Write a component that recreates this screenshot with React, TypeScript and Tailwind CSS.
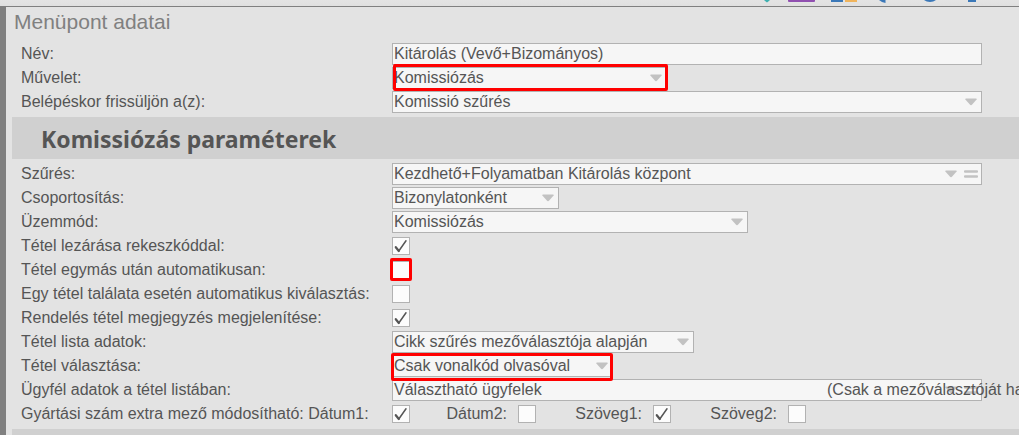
import { useState } from 'react'
import type { ReactNode } from 'react'
import clsx from 'clsx'

const FIELD = 'h-[22px] w-full border border-[#b2b2b2] bg-[#f6f6f6] px-px text-base leading-5 text-[#555] outline-none'

function Row({ label, id, children }: { label: string; id: string; children: ReactNode }) {
  return (
    <div className="flex h-6 items-center">
      <label htmlFor={id} className="w-[371px] shrink-0 whitespace-nowrap">{label}</label>
      {children}
    </div>
  )
}

function Arrow() {
  return (
    <svg viewBox="0 0 12 8" className="h-2 w-3" fill="#c2c2c2">
      <path d="M1 .5h10q1 0 .6 1L7.2 6.6q-1.2 1.2-2.4 0L.4 1.5Q0 .5 1 .5z" />
    </svg>
  )
}

function Equals() {
  return (
    <svg viewBox="0 0 14 8" className="h-2 w-3.5" fill="#c2c2c2">
      <rect y=".2" width="14" height="2.5" rx="1" />
      <rect y="5.2" width="14" height="2.5" rx="1" />
    </svg>
  )
}

interface SelectProps {
  id: string
  value: string
  width: string
  withEquals?: boolean
  children?: ReactNode
}

function Select({ id, value, width, withEquals, children }: SelectProps) {
  return (
    <div className={clsx('relative', width)}>
      <select id={id} className={clsx(FIELD, 'appearance-none rounded-none')}>
        <option>{value}</option>
      </select>
      <div className={clsx('pointer-events-none absolute inset-y-0 flex items-center gap-[7px]', withEquals ? 'right-1' : 'right-[5px]')}>
        <Arrow />
        {withEquals && <Equals />}
      </div>
      {children}
    </div>
  )
}

function Check({ id, initial = false, children }: { id: string; initial?: boolean; children?: ReactNode }) {
  const [checked, setChecked] = useState(initial)
  return (
    <div className="relative size-[18px] shrink-0">
      <input
        id={id}
        type="checkbox"
        checked={checked}
        onChange={e => setChecked(e.target.checked)}
        className="block size-[18px] appearance-none border border-[#b2b2b2] bg-[#fcfcfc]"
      />
      {checked && (
        <svg viewBox="0 0 18 18" className="pointer-events-none absolute inset-0" fill="none" stroke="#555" strokeLinecap="round" strokeLinejoin="round">
          <path d="M3.8 10.2L6.8 14" strokeWidth="2.2" />
          <path d="M6.8 14L14 3.8" strokeWidth="1.5" />
        </svg>
      )}
      {children}
    </div>
  )
}

function Highlight({ className }: { className: string }) {
  return <div className={clsx('pointer-events-none absolute z-10 rounded-xs border-3 border-[#f00]', className)} />
}

function Toolbar() {
  return (
    <div className="flex h-1.5 justify-end bg-linear-to-b from-[#e4e4e4] to-[#e0e0e0]">
      <svg viewBox="0 0 259 6" className="h-1.5 w-[259px]">
        <path d="M4 0h6L7.5 2.2h-1z" fill="#3fb0b0" />
        <path d="M28 0h27v1q0 1-1 1H29q-1 0-1-1z" fill="#9050b0" />
        <path d="M71 0h12v2H71z" fill="#3b78b8" />
        <path d="M85 0h12v2H85z" fill="#f0b45c" />
        <path d="M119 0h6.5v3q-3 0-6.5-3z" fill="#3b78b8" />
        <path d="M164 0h12q-2.5 2-6 2t-6-2z" fill="#3b78b8" />
        <path d="M208 0h8v2h-8z" fill="#3b78b8" />
      </svg>
    </div>
  )
}

export default function App() {
  return (
    <div className="min-h-screen overflow-hidden bg-[#e3e3e3] font-['Liberation_Sans',Arial,sans-serif] text-base leading-5 text-[#555]">
      <Toolbar />
      <main className="border-t border-l-6 border-[#808080]">
        <h1 className="px-2 text-[21px] leading-[30px] text-[#808080]">Menüpont adatai</h1>

        <section className="mt-[5px] pr-[37px] pb-[3px] pl-[15px]">
          <Row label="Név:" id="nev">
            <input id="nev" type="text" defaultValue="Kitárolás (Vevő+Bizományos)" className={FIELD} />
          </Row>
          <Row label="Művelet:" id="muvelet">
            <Select id="muvelet" value="Komissiózás" width="w-[275px]">
              <Highlight className="-top-[3px] -right-px -bottom-0.5 left-px" />
            </Select>
          </Row>
          <Row label="Belépéskor frissüljön a(z):" id="frissul">
            <Select id="frissul" value="Komissió szűrés" width="flex-1" />
          </Row>
        </section>

        <h2 className="ml-1.5 bg-[#d0d0d0] pt-0.5 pl-[29px] font-['Noto_Sans','Open_Sans',sans-serif] text-[23px] leading-10 font-bold">
          Komissiózás paraméterek
        </h2>

        <section className="py-[3px] pr-[37px] pl-[15px]">
          <Row label="Szűrés:" id="szures">
            <Select id="szures" value="Kezdhető+Folyamatban Kitárolás központ" width="flex-1" withEquals />
          </Row>
          <Row label="Csoportosítás:" id="csoport">
            <Select id="csoport" value="Bizonylatonként" width="w-[167px]" />
          </Row>
          <Row label="Üzemmód:" id="uzemmod">
            <Select id="uzemmod" value="Komissiózás" width="w-[356px]" />
          </Row>
          <Row label="Tétel lezárása rekeszkóddal:" id="lezaras">
            <Check id="lezaras" initial />
          </Row>
          <Row label="Tétel egymás után automatikusan:" id="egymas">
            <Check id="egymas">
              <Highlight className="-top-[3px] -right-0.5 -bottom-0.5 -left-0.5" />
            </Check>
          </Row>
          <Row label="Egy tétel találata esetén automatikus kiválasztás:" id="kivalaszt">
            <Check id="kivalaszt" />
          </Row>
          <Row label="Rendelés tétel megjegyzés megjelenítése:" id="megjegyzes">
            <Check id="megjegyzes" initial />
          </Row>
          <Row label="Tétel lista adatok:" id="lista">
            <Select id="lista" value="Cikk szűrés mezőválasztója alapján" width="w-[302px]" />
          </Row>
          <Row label="Tétel választása:" id="valasztas">
            <Select id="valasztas" value="Csak vonalkód olvasóval" width="w-[221px]">
              <Highlight className="-top-0.5 right-0 -bottom-1 -left-px" />
            </Select>
          </Row>
          <Row label="Ügyfél adatok a tétel listában:" id="ugyfel">
            <Select id="ugyfel" value="Választható ügyfelek" width="flex-1" withEquals>
              <span className="pointer-events-none absolute top-px left-full -ml-[155px] whitespace-nowrap">
                (Csak a mezőválasztóját ha
              </span>
            </Select>
          </Row>
          <Row label="Gyártási szám extra mező módosítható: Dátum1:" id="datum1">
            <Check id="datum1" initial />
            <label htmlFor="datum2" className="w-[108px] pr-[11px] text-right">Dátum2:</label>
            <Check id="datum2" />
            <label htmlFor="szoveg1" className="w-[117px] pr-[11px] text-right">Szöveg1:</label>
            <Check id="szoveg1" initial />
            <label htmlFor="szoveg2" className="w-[117px] pr-[11px] text-right">Szöveg2:</label>
            <Check id="szoveg2" />
          </Row>
        </section>

        <div className="ml-1.5 h-1.5 bg-[#d0d0d0]" />
      </main>
    </div>
  )
}
